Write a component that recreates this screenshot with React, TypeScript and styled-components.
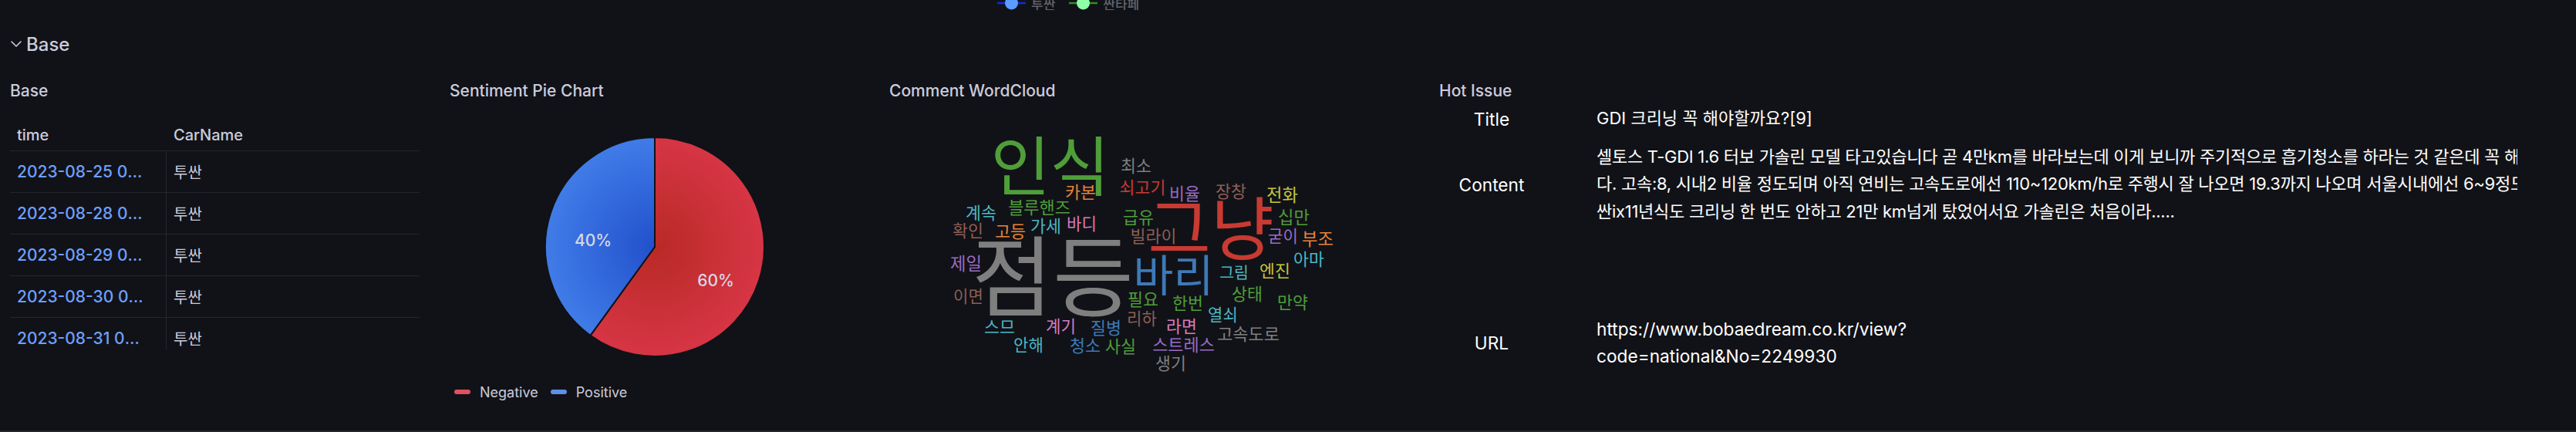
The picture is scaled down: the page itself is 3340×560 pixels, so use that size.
import styled, { createGlobalStyle } from 'styled-components'
import { ChevronDown } from 'lucide-react'

const colors = {
  bg: '#111217',
  text: '#ccccdc',
  link: '#6e9fff',
  line: '#24262c',
}

const GlobalStyle = createGlobalStyle`
  html, body {
    margin: 0;
    background: ${colors.bg};
  }
  * {
    box-sizing: border-box;
  }
`

const Page = styled.div`
  width: 3340px;
  height: 560px;
  overflow: hidden;
  background: ${colors.bg};
  color: ${colors.text};
  font-family: Inter, 'Noto Sans CJK KR', sans-serif;
  border-bottom: 2px solid ${colors.line};
`

const SeriesLegend = styled.div`
  height: 13px;
  overflow: hidden;
  display: flex;
  padding-left: 1293px;
  gap: 18px;
`

const SeriesItem = styled.div`
  display: flex;
  align-items: center;
  gap: 7px;
  height: 18px;
  margin-top: -5px;
  font-size: 17px;
  font-weight: 500;
  color: #62636a;
`

const SectionHeader = styled.div`
  height: 44px;
  margin-top: 22px;
  padding-left: 9px;
  display: flex;
  align-items: center;
  gap: 1px;
  font-size: 24px;
  font-weight: 500;
`

const Panels = styled.div`
  margin-top: 21px;
  display: grid;
  grid-template-columns: 570px 570px 713px 1487px;
`

const Panel = styled.section`
  height: 458px;
  overflow: hidden;
`

const PanelTitle = styled.h2`
  margin: 0;
  height: 34px;
  padding-left: 13px;
  display: flex;
  align-items: center;
  font-size: 21px;
  font-weight: 500;
`

const TableWrap = styled.div`
  width: 531px;
  height: 299px;
  margin: 21px 0 0 13px;
  overflow: hidden;
`

const TableRow = styled.div<{ $header?: boolean }>`
  display: grid;
  grid-template-columns: 203px 1fr;
  height: ${(p) => (p.$header ? '41px' : '54px')};
  border-bottom: 1px solid ${colors.line};
  font-size: ${(p) => (p.$header ? '20px' : '21px')};
`

const TimeCell = styled.div<{ $divider?: boolean }>`
  display: flex;
  align-items: center;
  min-width: 0;
  padding: 0 26px 0 9px;
  color: ${(p) => (p.$divider ? colors.link : colors.text)};
  font-weight: 500;
  border-right: 1px solid ${(p) => (p.$divider ? colors.line : 'transparent')};
  & span {
    overflow: hidden;
    white-space: nowrap;
    text-overflow: ellipsis;
  }
`

const NameCell = styled.div<{ $header?: boolean }>`
  display: flex;
  align-items: center;
  padding-left: 9px;
  font-size: 20px;
  font-weight: ${(p) => (p.$header ? 500 : 400)};
`

const PieBox = styled.div`
  margin: 31px 0 0 13px;
  width: 532px;
  height: 310px;
`

const PieLabel = styled.text`
  fill: #d8d8e6;
  font-size: 21px;
  font-weight: 500;
  text-anchor: middle;
  dominant-baseline: central;
`

const PieLegend = styled.div`
  margin: 21px 0 0 19px;
  height: 24px;
  display: flex;
  align-items: center;
  font-size: 18px;
`

const LegendItem = styled.div`
  display: flex;
  align-items: center;
  gap: 12px;
  margin-right: 16px;
`

const LegendSwatch = styled.span<{ $color: string }>`
  width: 21px;
  height: 6px;
  border-radius: 3px;
  background: ${(p) => p.$color};
`

const Cloud = styled.svg`
  display: block;
`

const CloudWord = styled.text`
  font-family: 'Noto Sans CJK KR', sans-serif;
  text-anchor: middle;
`

const IssueGrid = styled.div`
  margin-top: 2px;
  display: grid;
  grid-template-columns: 162px 1249px;
  grid-template-rows: 36px 134px 276px;
  color: #fff;
  font-size: 22.7px;
`

const IssueKey = styled.div`
  display: flex;
  align-items: center;
  justify-content: center;
`

const IssueValue = styled.div<{ $korean?: boolean; $tight?: boolean }>`
  padding-left: 55px;
  display: flex;
  flex-direction: column;
  justify-content: center;
  overflow: hidden;
  line-height: 35.5px;
  white-space: pre;
  font-size: ${(p) => (p.$korean ? '22px' : '22.7px')};
  letter-spacing: ${(p) => (p.$tight ? '-0.27px' : '0')};
`

const gray = '#7f7f7f'
const red = '#c83a32'
const green = '#4f9e3a'
const orange = '#e8833a'
const cyan = '#4db6c6'
const purple = '#9a6cc4'
const brown = '#8c5f55'
const pink = '#d87bc0'
const yellow = '#c5c43c'
const blue = '#3d7ab8'

// word, left, right, top, bottom (page pixels), colour
const words: [string, number, number, number, number, string][] = [
  ['인식', 1288, 1435, 175, 258, green],
  ['점등', 1265, 1465, 307, 412, gray],
  ['그냥', 1492, 1648, 257, 337, red],
  ['바리', 1472, 1571, 330, 385, blue],
  ['카본', 1382, 1420, 239, 259, orange],
  ['최소', 1454, 1492, 205, 225, gray],
  ['쇠고기', 1453, 1510, 233, 254, red],
  ['블루핸즈', 1309, 1386, 259, 280, green],
  ['계속', 1253, 1291, 266, 286, cyan],
  ['가세', 1337, 1375, 283, 304, cyan],
  ['바디', 1384, 1421, 280, 301, pink],
  ['급유', 1457, 1495, 272, 292, green],
  ['빌라이', 1467, 1524, 296, 317, brown],
  ['확인', 1236, 1274, 289, 310, brown],
  ['고등', 1291, 1329, 291, 310, orange],
  ['비율', 1517, 1555, 241, 262, purple],
  ['장창', 1577, 1615, 238, 259, brown],
  ['전화', 1643, 1682, 242, 263, yellow],
  ['십만', 1658, 1697, 271, 292, green],
  ['굳이', 1645, 1682, 296, 317, purple],
  ['부조', 1689, 1728, 300, 320, orange],
  ['아마', 1678, 1716, 325, 347, cyan],
  ['그림', 1582, 1618, 344, 364, cyan],
  ['엔진', 1634, 1672, 341, 362, yellow],
  ['상태', 1598, 1636, 371, 392, green],
  ['만약', 1657, 1695, 382, 403, green],
  ['한번', 1521, 1559, 383, 403, green],
  ['필요', 1463, 1501, 378, 398, green],
  ['열쇠', 1567, 1604, 398, 419, cyan],
  ['리하', 1462, 1499, 403, 424, brown],
  ['라면', 1513, 1551, 413, 433, pink],
  ['고속도로', 1580, 1657, 423, 443, gray],
  ['스트레스', 1496, 1573, 438, 457, purple],
  ['생기', 1499, 1537, 461, 482, gray],
  ['제일', 1233, 1272, 331, 352, purple],
  ['이면', 1237, 1274, 374, 395, brown],
  ['스므', 1277, 1315, 414, 434, cyan],
  ['계기', 1357, 1394, 413, 434, pink],
  ['질병', 1415, 1453, 415, 436, blue],
  ['안해', 1315, 1352, 437, 457, cyan],
  ['청소', 1388, 1426, 438, 458, blue],
  ['사실', 1434, 1472, 439, 460, green],
]

const rows = [
  '2023-08-25 09:00:00',
  '2023-08-28 09:00:00',
  '2023-08-29 09:00:00',
  '2023-08-30 09:00:00',
  '2023-08-31 09:00:00',
]

const series = [
  { name: '투싼', line: '#1029ee', dot: '#5c9bff' },
  { name: '싼타페', line: '#2f8f1f', dot: '#8fffa8' },
]

const SeriesMark = ({ line, dot }: { line: string; dot: string }) => (
  <svg width="37" height="18" viewBox="0 0 37 18">
    <line x1="0" y1="9" x2="37" y2="9" stroke={line} strokeWidth="2.5" />
    <circle cx="18.5" cy="9" r="8.5" fill={dot} />
  </svg>
)

const PieChart = () => (
  <svg width="532" height="310" viewBox="0 0 532 310">
    <defs>
      <radialGradient id="neg" gradientUnits="userSpaceOnUse" cx="266" cy="155" r="142">
        <stop offset="0" stopColor="#b82a26" />
        <stop offset="1" stopColor="#d73545" />
      </radialGradient>
      <radialGradient id="pos" gradientUnits="userSpaceOnUse" cx="266" cy="155" r="142">
        <stop offset="0" stopColor="#2250cc" />
        <stop offset="1" stopColor="#407ce8" />
      </radialGradient>
    </defs>
    <path
      d="M266 155 L266 13 A142 142 0 1 1 182.5 269.9 Z"
      fill="url(#neg)"
      stroke="#111217"
      strokeWidth="2"
      strokeLinejoin="round"
    />
    <path
      d="M266 155 L182.5 269.9 A142 142 0 0 1 266 13 Z"
      fill="url(#pos)"
      stroke="#111217"
      strokeWidth="2"
      strokeLinejoin="round"
    />
    <PieLabel x="186" y="146">40%</PieLabel>
    <PieLabel x="345" y="198">60%</PieLabel>
  </svg>
)

const WordCloud = () => (
  <Cloud width="713" height="424" viewBox="1140 134 713 424">
    {words.map(([word, x1, x2, y1, y2, color]) => {
      const size = ((x2 - x1) / word.length) * 1.14
      return (
        <CloudWord
          key={word}
          x={(x1 + x2) / 2}
          y={(y1 + y2) / 2 + size * 0.36}
          fontSize={size}
          fill={color}
        >
          {word}
        </CloudWord>
      )
    })}
  </Cloud>
)

export default function App() {
  return (
    <Page>
      <GlobalStyle />
      <SeriesLegend>
        {series.map((s) => (
          <SeriesItem key={s.name}>
            <SeriesMark line={s.line} dot={s.dot} />
            {s.name}
          </SeriesItem>
        ))}
      </SeriesLegend>
      <SectionHeader>
        <ChevronDown size={24} strokeWidth={1.6} />
        Base
      </SectionHeader>
      <Panels>
        <Panel>
          <PanelTitle>Base</PanelTitle>
          <TableWrap>
            <TableRow $header>
              <TimeCell>
                <span>time</span>
              </TimeCell>
              <NameCell $header>CarName</NameCell>
            </TableRow>
            {rows.map((time) => (
              <TableRow key={time}>
                <TimeCell $divider>
                  <span>{time}</span>
                </TimeCell>
                <NameCell>투싼</NameCell>
              </TableRow>
            ))}
          </TableWrap>
        </Panel>
        <Panel>
          <PanelTitle>Sentiment Pie Chart</PanelTitle>
          <PieBox>
            <PieChart />
          </PieBox>
          <PieLegend>
            <LegendItem>
              <LegendSwatch $color="#e0505f" />
              Negative
            </LegendItem>
            <LegendItem>
              <LegendSwatch $color="#5e8fe8" />
              Positive
            </LegendItem>
          </PieLegend>
        </Panel>
        <Panel>
          <PanelTitle>Comment WordCloud</PanelTitle>
          <WordCloud />
        </Panel>
        <Panel>
          <PanelTitle>Hot Issue</PanelTitle>
          <IssueGrid>
            <IssueKey>Title</IssueKey>
            <IssueValue $korean>GDI 크리닝 꼭 해야할까요?[9]</IssueValue>
            <IssueKey>Content</IssueKey>
            <IssueValue $korean $tight>
              <div>셀토스 T-GDI 1.6 터보 가솔린 모델 타고있습니다 곧 4만km를 바라보는데 이게 보니까 주기적으로 흡기청소를 하라는 것 같은데 꼭 해야 합니</div>
              <div>다. 고속:8, 시내2 비율 정도되며 아직 연비는 고속도로에선 110~120km/h로 주행시 잘 나오면 19.3까지 나오며 서울시내에선 6~9정도</div>
              <div>싼ix11년식도 크리닝 한 번도 안하고 21만 km넘게 탔었어서요 가솔린은 처음이라.....</div>
            </IssueValue>
            <IssueKey>URL</IssueKey>
            <IssueValue>
              <div>https://www.bobaedream.co.kr/view?</div>
              <div>code=national&amp;No=2249930</div>
            </IssueValue>
          </IssueGrid>
        </Panel>
      </Panels>
    </Page>
  )
}
